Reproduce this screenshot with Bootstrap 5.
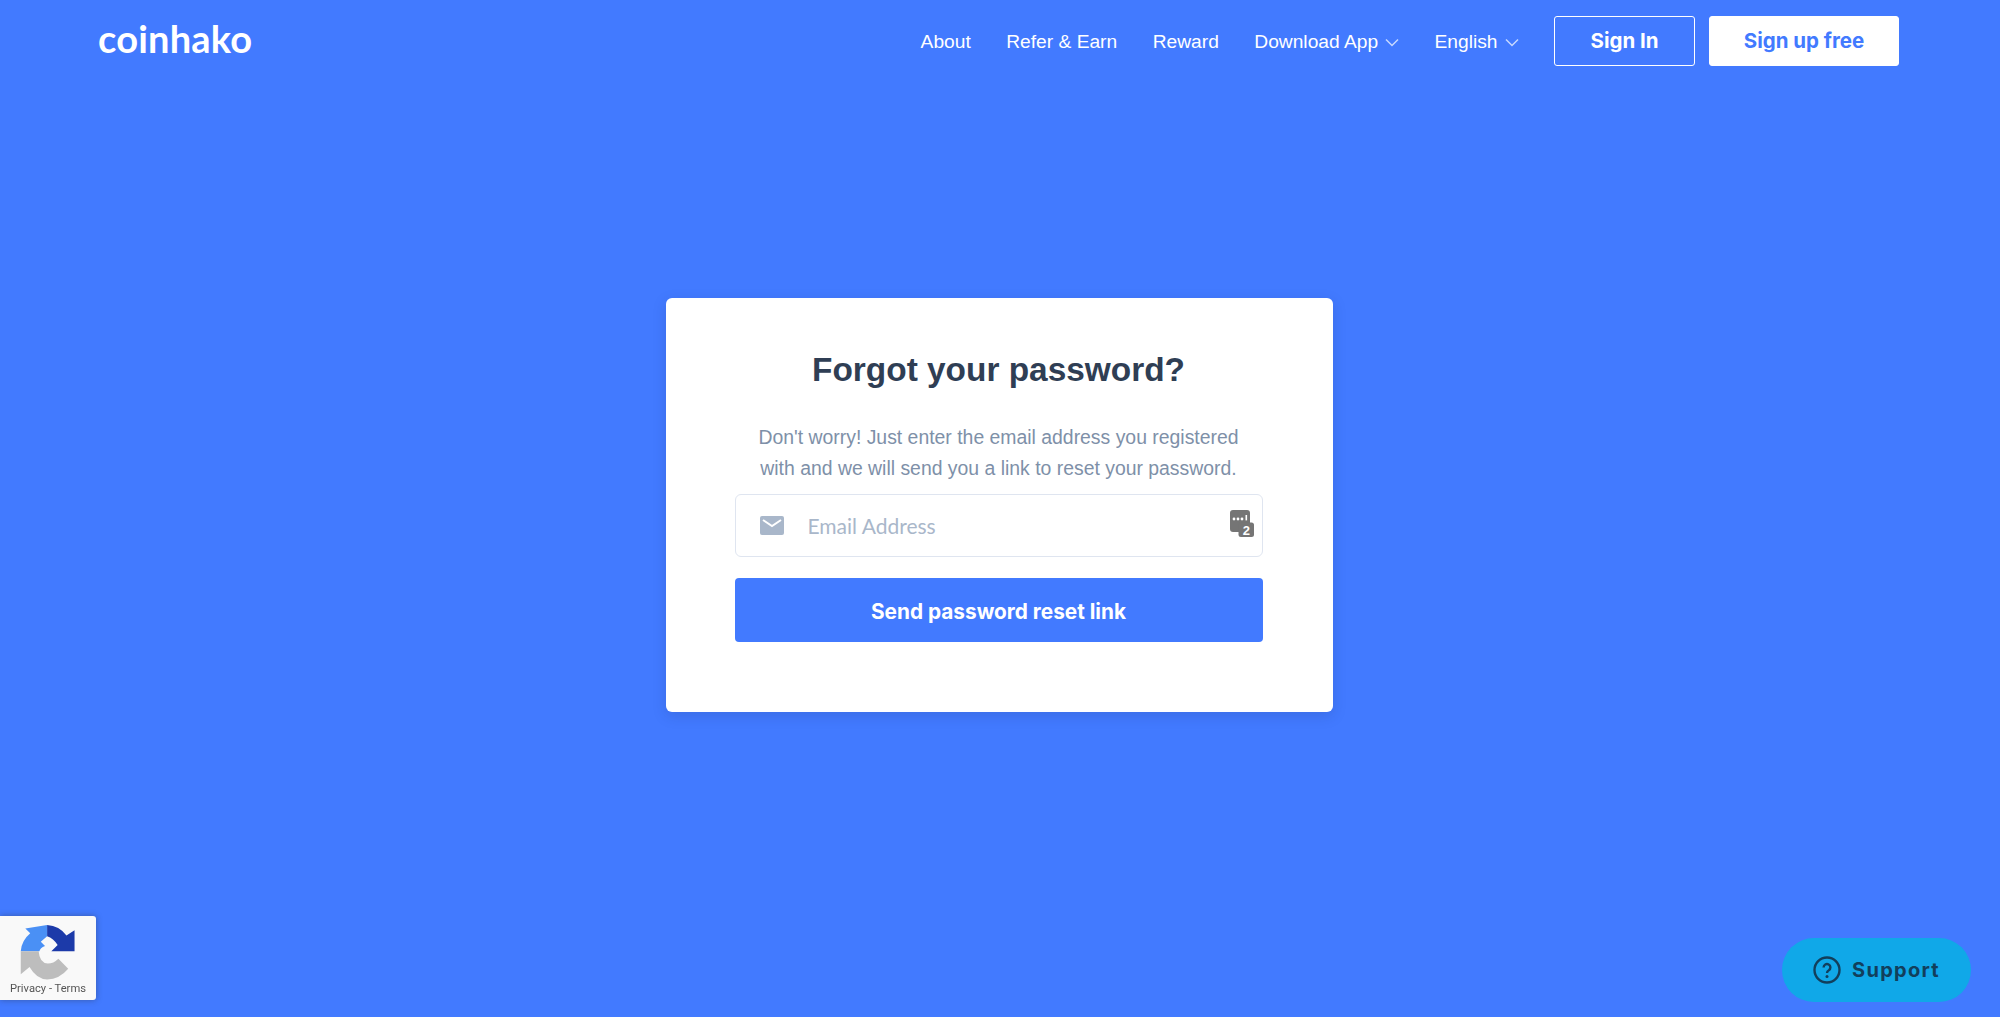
<!DOCTYPE html>
<html lang="en">
<head>
  <meta charset="UTF-8">
  <title>Coinhako - Forgot your password</title>
  <meta name="viewport" content="width=device-width, initial-scale=1">
  <link href="https://cdn.jsdelivr.net/npm/bootstrap@5.3.3/dist/css/bootstrap.min.css" rel="stylesheet">
  <style>
    body {
      background: #427aff;
      font-family: "Liberation Sans", Arial, sans-serif;
      min-height: 1017px;
      overflow: hidden;
    }
    .top-nav {
      height: 82px;
      padding: 0 101px 0 98px;
    }
    .logo-text {
      font-family: Lato, sans-serif;
      font-weight: 700;
      font-size: 38px;
      letter-spacing: 0.2px;
      color: #fff;
      line-height: 1;
      padding: 0 0 6px;
      margin: 0;
    }
    .top-nav .nav-link {
      color: #fff;
      font-size: 19.2px;
      padding: 2px 0 0;
      margin-right: 35.5px;
    }
    .chev {
      width: 14px;
      height: 9px;
      margin-left: 7px;
    }
    .btn-signin, .btn-signup {
      font-family: Inter, sans-serif;
      font-weight: 700;
      font-size: 20.5px;
      height: 50px;
      border-radius: 3px;
      border: 1.5px solid #fff;
      display: flex;
      align-items: center;
      justify-content: center;
    }
    .btn-signin {
      width: 141px;
      color: #fff;
      background: transparent;
      margin-right: 14px;
    }
    .btn-signup {
      width: 190px;
      color: #427aff;
      background: #fff;
    }
    .reset-wrap {
      padding-top: 216px;
      padding-right: 2px;
    }
    .reset-card {
      width: 667px;
      height: 414px;
      border: 0;
      border-radius: 6px;
      padding: 48px 70px 0 69px;
      box-shadow: 0 4px 14px rgba(30, 50, 110, 0.18);
    }
    .reset-title {
      font-size: 33.4px;
      font-weight: 700;
      color: #2f3e54;
      line-height: 48px;
      margin-bottom: 28px;
    }
    .reset-text {
      font-size: 19.4px;
      line-height: 30.6px;
      color: #7e90a8;
      margin-bottom: 11px;
    }
    .mail-field {
      height: 63px;
      border: 1.5px solid #dfe5f0;
      border-radius: 6px;
      margin-bottom: 21px;
      padding: 0 8px 0 24px;
    }
    .mail-field input {
      border: 0;
      box-shadow: none;
      padding: 0;
      margin-left: 24px;
      font-family: Lato, sans-serif;
      font-size: 21px;
    }
    .mail-field input::placeholder {
      color: #a9b7ca;
      opacity: 1;
    }
    .mail-field input:focus {
      box-shadow: none;
    }
    .btn-send {
      height: 64px;
      padding-top: 8px;
      background: #427aff;
      color: #fff;
      font-family: Inter, sans-serif;
      font-weight: 700;
      font-size: 20.8px;
      border: 0;
      border-radius: 4px;
    }
    .captcha-badge {
      position: fixed;
      left: 0;
      bottom: 17px;
      width: 96px;
      height: 84px;
      background: #f9f9f9;
      border-radius: 0 3px 3px 0;
      box-shadow: 0 0 6px rgba(40, 40, 40, 0.4);
      color: #555;
      font-family: Roboto, sans-serif;
      font-size: 11.2px;
      line-height: 1.2;
    }
    .captcha-badge svg {
      width: 58px;
      height: 60px;
      margin-top: 6px;
    }
    .support-pill {
      position: fixed;
      left: 1782px;
      top: 938px;
      width: 189px;
      height: 64px;
      border-radius: 32px;
      background: #10a8e8;
      color: #123f5c;
      font-family: Inter, sans-serif;
      font-weight: 700;
      font-size: 20px;
      letter-spacing: 1.3px;
      gap: 11px;
    }
  </style>
</head>
<body>

<nav class="navbar top-nav d-flex align-items-center justify-content-between flex-nowrap">
  <a class="navbar-brand logo-text" href="#">coinhako</a>
  <div class="d-flex align-items-center">
    <ul class="nav align-items-center">
      <li class="nav-item"><a class="nav-link" href="#">About</a></li>
      <li class="nav-item"><a class="nav-link" href="#">Refer &amp; Earn</a></li>
      <li class="nav-item"><a class="nav-link" href="#">Reward</a></li>
      <li class="nav-item"><a class="nav-link" href="#">Download App<svg class="chev" viewBox="0 0 14 9"><path d="M1 1.5l6 6 6-6" fill="none" stroke="#c6d8ff" stroke-width="1.5"/></svg></a></li>
      <li class="nav-item"><a class="nav-link" href="#">English<svg class="chev" viewBox="0 0 14 9"><path d="M1 1.5l6 6 6-6" fill="none" stroke="#c6d8ff" stroke-width="1.5"/></svg></a></li>
    </ul>
    <a class="btn btn-signin" href="#">Sign In</a>
    <a class="btn btn-signup" href="#">Sign up free</a>
  </div>
</nav>

<div class="reset-wrap d-flex justify-content-center">
  <div class="card reset-card text-center">
    <h1 class="reset-title">Forgot your password?</h1>
    <p class="reset-text">Don't worry! Just enter the email address you registered<br>with and we will send you a link to reset your password.</p>
    <div class="mail-field d-flex align-items-center">
      <svg width="24" height="19" viewBox="0 0 24 19" class="flex-shrink-0">
        <rect width="24" height="19" rx="2" fill="#a9b7ca"/>
        <path d="M3 4l9 6 9-6" fill="none" stroke="#fff" stroke-width="2"/>
      </svg>
      <input type="email" class="form-control" placeholder="Email Address">
      <svg width="24" height="27" viewBox="0 0 24 27" class="flex-shrink-0 mb-1">
        <rect x="0" y="0" width="20" height="22" rx="3" fill="#757575"/>
        <rect x="8.5" y="12.5" width="15.5" height="14.5" rx="2.5" fill="#757575"/>
        <circle cx="4" cy="9" r="1.4" fill="#fff"/>
        <circle cx="8" cy="9" r="1.4" fill="#fff"/>
        <circle cx="12" cy="9" r="1.4" fill="#fff"/>
        <rect x="15.5" y="5" width="1.6" height="5.4" fill="#fff"/>
        <text x="16.3" y="25" text-anchor="middle" font-family="Liberation Sans" font-weight="700" font-size="13" fill="#fff">2</text>
      </svg>
    </div>
    <button type="button" class="btn btn-send w-100">Send password reset link</button>
  </div>
</div>

<div class="captcha-badge text-center">
  <svg viewBox="60 72 165 170" class="d-block mx-auto">
    <path d="M65 155Q67 125 92 104L78 90L140 80V112L122 128L134 140Q120 145 118 155Z" fill="#4a90f5"/>
    <path d="M140 80Q175 82 195 110L218 95V155H152L170 137Q158 118 140 112Z" fill="#1c3aa9"/>
    <path d="M65 155H116Q118 188 142 190Q158 190 172 176L200 205Q175 235 140 235Q110 235 90 200L65 220Z" fill="#bdbdbd"/>
  </svg>
  <div>Privacy - Terms</div>
</div>

<div class="support-pill d-flex align-items-center justify-content-center">
  <svg width="28" height="28" viewBox="0 0 28 28">
    <circle cx="14" cy="14" r="12.5" fill="none" stroke="#123f5c" stroke-width="2.4"/>
    <path d="M10.6 11.4a3.4 3.4 0 1 1 5.2 2.9c-1.2.7-1.8 1.3-1.8 2.7" fill="none" stroke="#123f5c" stroke-width="2.4"/>
    <circle cx="14" cy="20.4" r="1.5" fill="#123f5c"/>
  </svg>
  <span>Support</span>
</div>

</body>
</html>
